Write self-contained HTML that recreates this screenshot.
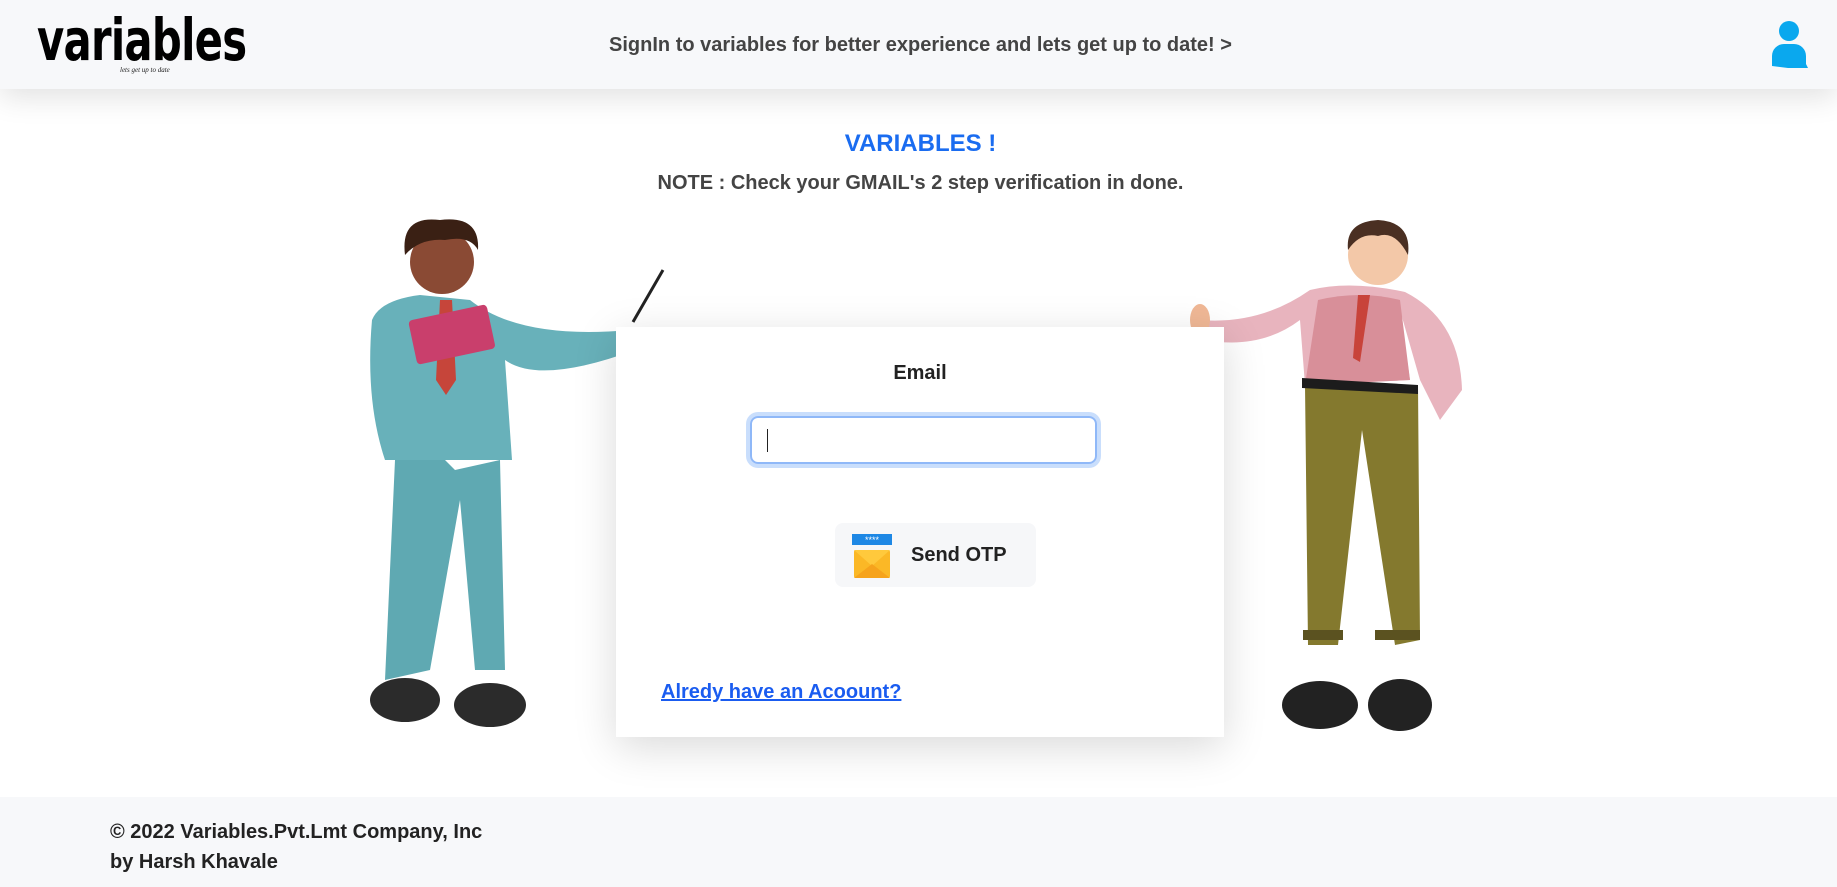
<!DOCTYPE html>
<html><head><meta charset="utf-8">
<style>
*{margin:0;padding:0;box-sizing:border-box}
html,body{width:1837px;height:887px;overflow:hidden;background:#fff;font-family:"Liberation Sans",sans-serif}
.hdr{position:absolute;left:0;top:0;width:1837px;height:89px;background:#f7f8fa;box-shadow:0 8px 30px rgba(0,0,0,.12)}
.logo{position:absolute;left:37px;top:6px;font-size:58px;font-weight:900;color:#000;letter-spacing:-1px;font-family:"DejaVu Sans","Liberation Sans",sans-serif;transform:scaleX(0.72);transform-origin:left}
.tag{position:absolute;left:120px;top:66px;font-size:7px;font-style:italic;color:#222;font-family:"Liberation Serif",serif}
.htxt{position:absolute;left:0;width:1841px;text-align:center;top:34px;font-size:20px;font-weight:bold;color:#444}
.ttl{position:absolute;width:1841px;text-align:center;top:130px;font-size:24px;font-weight:bold;color:#1a6cf0}
.note{position:absolute;width:1841px;text-align:center;top:172px;font-size:20px;font-weight:bold;color:#444}
.card{position:absolute;left:616px;top:327px;width:608px;height:410px;background:#fff;box-shadow:0 10px 40px rgba(0,0,0,.15)}
.lbl{position:absolute;left:0;width:608px;text-align:center;top:35px;font-size:20px;font-weight:bold;color:#222}
.inp{position:absolute;left:134px;top:89px;width:347px;height:48px;border:2px solid #8fb8f8;border-radius:8px;box-shadow:0 0 0 4px #c9defc}
.inp i{position:absolute;left:15px;top:11px;width:1px;height:23px;background:#222}
.btn{position:absolute;left:219px;top:196px;width:201px;height:64px;background:#f6f7f9;border-radius:8px}
.btn span{position:absolute;left:76px;top:21px;font-size:20px;font-weight:bold;color:#222}
.lnk{position:absolute;left:45px;top:354px;font-size:20px;font-weight:bold;color:#1a5cf0;text-decoration:underline}
.ftr{position:absolute;left:0;top:797px;width:1837px;height:90px;background:#f7f8fa}
.ftr div{position:absolute;left:110px;font-size:20px;font-weight:bold;color:#222}
</style></head><body>
<div class="hdr">
<div class="logo">variables</div>
<div class="tag">lets get up to date</div>
<div class="htxt">SignIn to variables for better experience and lets get up to date! &gt;</div>
<svg style="position:absolute;left:1770px;top:20px" width="38" height="50" viewBox="0 0 38 50"><circle cx="19" cy="11" r="10" fill="#0aa8ee"/><path d="M2 46 V36 a12 12 0 0 1 12 -12 h10 a12 12 0 0 1 12 12 v8 l2 4 h-20 z" fill="#0aa8ee"/></svg>
</div>
<div class="ttl">VARIABLES !</div>
<div class="note">NOTE : Check your GMAIL's 2 step verification in done.</div>

<svg style="position:absolute;left:350px;top:210px" width="330" height="530" viewBox="350 210 330 530">
<line x1="633" y1="322" x2="663" y2="270" stroke="#222" stroke-width="3"/>
<path d="M385 680 L395 460 L445 460 L455 470 L500 460 L505 670 L475 670 L460 500 L430 670 Z" fill="#5fa9b2"/>
<path d="M372 320 Q380 300 420 295 L470 300 Q520 340 630 330 L635 350 Q540 385 505 360 L512 460 L385 460 Q365 400 372 320 Z" fill="#68b1ba"/>
<path d="M440 300 L452 300 L456 380 L446 395 L436 380 Z" fill="#c6453a"/>
<rect x="412" y="312" width="80" height="45" rx="4" fill="#c93f6c" transform="rotate(-12 452 335)"/>
<circle cx="442" cy="262" r="32" fill="#8a4a34"/>
<path d="M405 255 Q400 215 440 220 Q480 215 478 250 Q470 235 445 240 Q420 238 405 255Z" fill="#3a2014"/>
<ellipse cx="405" cy="700" rx="35" ry="22" fill="#2b2b2b"/>
<ellipse cx="490" cy="705" rx="36" ry="22" fill="#2b2b2b"/>
</svg>

<svg style="position:absolute;left:1190px;top:215px" width="280" height="530" viewBox="1190 215 280 530">
<path d="M1305 385 L1418 385 L1420 640 L1395 645 L1362 430 L1338 645 L1308 645 Z" fill="#84792e"/>
<path d="M1303 640 h40 v-10 h-40 z M1375 640 h45 v-10 h-45z" fill="#5b5220"/>
<path d="M1310 290 Q1350 280 1405 292 Q1460 320 1462 390 L1440 420 L1420 380 L1400 310 L1410 380 L1305 385 L1300 320 Q1260 350 1205 340 L1200 320 Q1260 325 1310 290 Z" fill="#e8b4be"/>
<path d="M1318 300 Q1360 290 1400 300 L1410 380 L1305 385 Z" fill="#d88f99"/>
<path d="M1302 378 L1418 385 L1418 394 L1302 388Z" fill="#1c1c1c"/>
<path d="M1358 295 L1370 295 L1360 362 L1353 358 Z" fill="#c8433a"/>
<circle cx="1378" cy="255" r="30" fill="#f3c8a8"/>
<path d="M1348 250 Q1345 222 1378 220 Q1412 222 1408 255 Q1395 230 1378 236 Q1360 232 1348 250Z" fill="#4a2f22"/>
<ellipse cx="1200" cy="320" rx="10" ry="16" fill="#f0b896"/>
<ellipse cx="1320" cy="705" rx="38" ry="24" fill="#222"/>
<ellipse cx="1400" cy="705" rx="32" ry="26" fill="#222"/>
</svg>

<div class="card">
<div class="lbl">Email</div>
<div class="inp"><i></i></div>
<div class="btn">
<svg style="position:absolute;left:17px;top:11px" width="40" height="44" viewBox="0 0 40 44"><rect x="0" y="0" width="40" height="11" fill="#1e88e5"/><text x="20" y="9" font-size="9" fill="#fff" text-anchor="middle" font-family="Liberation Sans">****</text><rect x="2" y="16" width="36" height="28" rx="2" fill="#fbb826"/><path d="M2 16 L20 32 L38 16" fill="#ffc93c"/><path d="M2 44 L20 30 L38 44" fill="#f6a31c"/></svg>
<span>Send OTP</span></div>
<div class="lnk">Alredy have an Acoount?</div>
</div>

<div class="ftr">
<div style="top:24px">© 2022 Variables.Pvt.Lmt Company, Inc</div>
<div style="top:54px">by Harsh Khavale</div>
</div>
</body></html>
